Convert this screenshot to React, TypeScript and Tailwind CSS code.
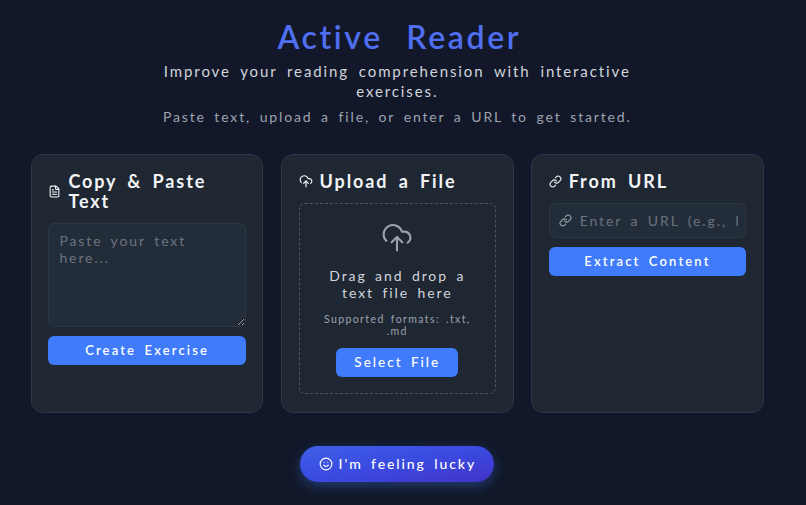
import { FileText, Link, Smile } from "lucide-react";

const font = { fontFamily: '"Lato", "Noto Sans", sans-serif' };

function UploadCloud({ size, strokeWidth = 2, className = "" }: { size: number; strokeWidth?: number; className?: string }) {
  return (
    <svg
      width={size}
      height={size}
      viewBox="0 0 24 24"
      fill="none"
      stroke="currentColor"
      strokeWidth={strokeWidth}
      strokeLinecap="round"
      strokeLinejoin="round"
      className={className}
    >
      <path d="M4 14.899A7 7 0 1 1 15.71 8h1.79a4.5 4.5 0 0 1 2.5 8.242" />
      <path d="M12 12v10" />
      <path d="m16 16-4-4-4 4" />
    </svg>
  );
}

function Card({ children }: { children: React.ReactNode }) {
  return (
    <div className="flex min-w-0 flex-col rounded-xl border border-[#2c3644] bg-[#1f2733] p-[16.6px]">{children}</div>
  );
}

function CardTitle({ icon, children }: { icon: React.ReactNode; children: React.ReactNode }) {
  return (
    <div className="mb-[12px] flex items-center gap-[7px] text-[#f3f4f6]">
      <span className="shrink-0">{icon}</span>
      <h2 className="text-[18px] leading-[20px] font-bold tracking-[1.9px] [word-spacing:4px]">{children}</h2>
    </div>
  );
}

export default function App() {
  return (
    <div className="h-[505px] w-[806px] overflow-hidden bg-[#121829]" style={font}>
      <div className="ml-[30.8px] w-[733px] pt-[18px]">
        <div className="flex flex-col items-center">
          <h1 className="pl-[4px] text-[32px] leading-[37px] font-semibold tracking-[2.6px] text-[#4f6ff0] [word-spacing:13px]">Active Reader</h1>
          <p className="mt-[6px] w-[480px] text-center text-[15px] leading-[20px] tracking-[1.9px] text-[#d1d5db] [word-spacing:4px]">
            Improve your reading comprehension with interactive exercises.
          </p>
          <p className="mt-[5.5px] text-[14px] leading-[20px] tracking-[1.85px] text-[#9ca3af] [word-spacing:3.2px]">
            Paste text, upload a file, or enter a URL to get started.
          </p>
        </div>

        <div className="mt-[27px] grid h-[259px] grid-cols-3 gap-[17.5px]">
          <Card>
            <CardTitle icon={<FileText size={13} />}>Copy &amp; Paste Text</CardTitle>
            <textarea
              readOnly
              placeholder="Paste your text here..."
              className="h-[104px] w-full rounded-md border border-[#2c3644] bg-[#232d3a] px-[10px] py-[8px] text-[14px] leading-[17px] tracking-[1.9px] text-white placeholder:text-[#6b7280] outline-none [word-spacing:3px]"
            />
            <button className="mt-[8.7px] h-[29px] w-full rounded-md bg-[#3f7bfa] text-[13px] font-semibold tracking-[2.15px] text-white [word-spacing:3px]">
              Create Exercise
            </button>
          </Card>

          <Card>
            <CardTitle icon={<UploadCloud size={14} />}>Upload a File</CardTitle>
            <div className="flex h-[191.4px] flex-col items-center rounded-md border border-dashed border-[#4b5563] px-[18px] pt-[17px]">
              <UploadCloud size={32} strokeWidth={1.6} className="text-[#9ca3af]" />
              <p className="mt-[14px] text-center text-[14px] leading-[17px] tracking-[1.9px] text-[#d1d5db] [word-spacing:3px]">
                Drag and drop a text file here
              </p>
              <p className="mt-[12px] text-center text-[10.5px] leading-[12px] tracking-[1.4px] text-[#9ca3af] [word-spacing:2px]">
                Supported formats: .txt, .md
              </p>
              <button className="mt-[11px] h-[29px] w-[122px] shrink-0 rounded-md bg-[#3f7bfa] text-[13.5px] font-medium tracking-[2px] text-white [word-spacing:3px]">
                Select File
              </button>
            </div>
          </Card>

          <Card>
            <CardTitle icon={<Link size={13} />}>From URL</CardTitle>
            <div className="flex h-[35px] items-center gap-[8px] overflow-hidden rounded-md border border-[#2c3644] bg-[#232d3a] pl-[9px] pr-[7px]">
              <Link size={13} className="shrink-0 text-[#9ca3af]" />
              <input
                readOnly
                placeholder="Enter a URL (e.g., https://example.com)"
                className="min-w-0 flex-1 bg-transparent text-[14px] tracking-[1.9px] placeholder:text-[#6b7280] outline-none [word-spacing:3px]"
              />
            </div>
            <button className="mt-[9px] h-[29px] w-full rounded-md bg-[#3f7bfa] text-[13px] font-semibold tracking-[2.15px] text-white [word-spacing:3px]">
              Extract Content
            </button>
          </Card>
        </div>

        <div className="mt-[33px] flex justify-center">
          <button className="flex h-[36px] w-[194px] items-center justify-center gap-[6px] rounded-full bg-[linear-gradient(170deg,#3f5fe8,#3a4ae0_50%,#4433c8)] text-[14px] font-medium tracking-[1.9px] text-white shadow-[0_4px_12px_rgba(59,130,246,0.35)] [word-spacing:3px]">
            <Smile size={14} />
            I'm feeling lucky
          </button>
        </div>
      </div>
    </div>
  );
}
